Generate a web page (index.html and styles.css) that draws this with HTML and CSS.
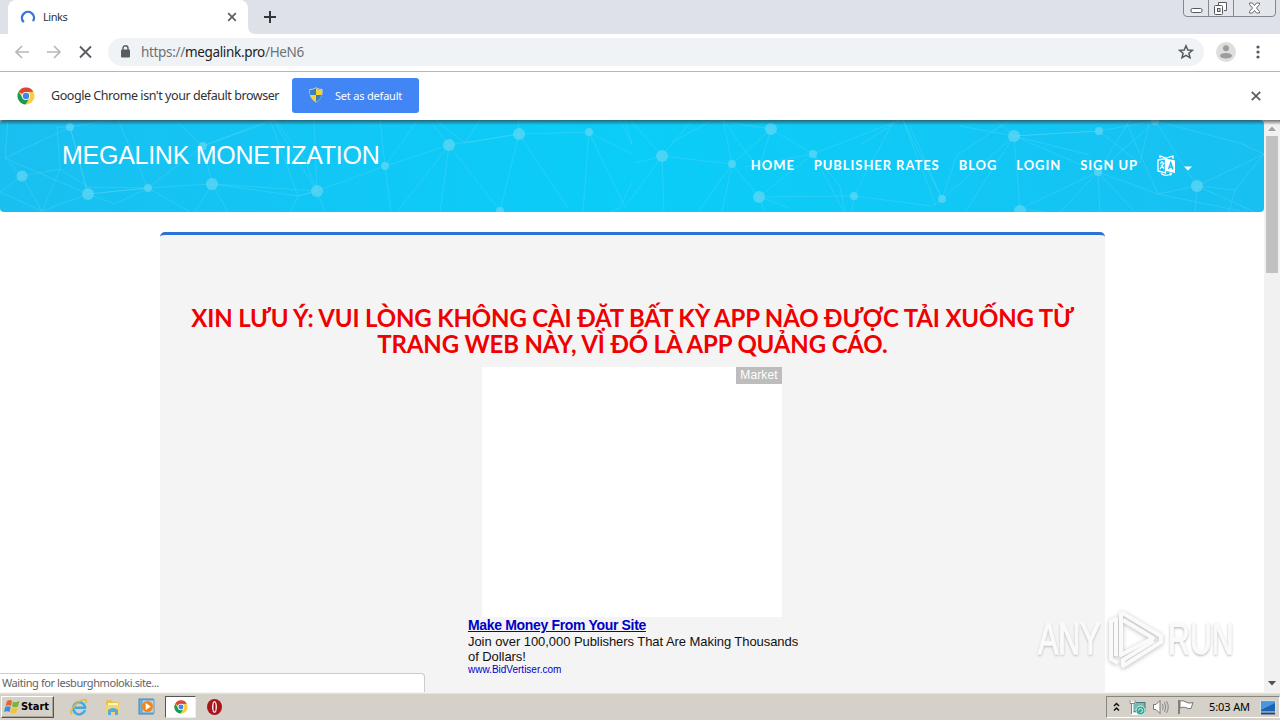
FILE: index.html
```
<!DOCTYPE html>
<html lang="en">
<head>
<meta charset="utf-8">
<title>Links</title>
<link rel="stylesheet" href="styles.css">
</head>
<body>
<svg width="0" height="0" class="defs">
  <defs>
    <symbol id="chrome" viewBox="0 0 18 18">
      <circle cx="9" cy="9" r="8.5" fill="#f9cd45"/>
      <path d="M9 9 1.6 4.800A8.500 8.500 0 0 1 16.400 4.800L9 5z" fill="#dc4437"/>
      <path d="M1.600 4.800A8.500 8.500 0 0 0 8.600 17.500L12.400 11 9 9 5.400 10.800z" fill="#179c58"/>
      <circle cx="9" cy="9" r="4.100" fill="#fff"/>
      <circle cx="9" cy="9" r="3.200" fill="#4285e8"/>
    </symbol>
  </defs>
</svg>
<div class="tabstrip">
  <div class="tab">
    <svg class="spin" width="16" height="16" viewBox="0 0 16 16"><path d="M3.800 13.200A6 6 0 1 1 13 12.200" fill="none" stroke="#3b73d8" stroke-width="2.400"/></svg>
    <span class="tab-title">Links</span>
    <svg width="10" height="10" viewBox="0 0 10 10"><path d="M1.200 1.200 8.800 8.800M8.800 1.200 1.200 8.800" stroke="#5b5f64" stroke-width="1.700"/></svg>
  </div>
  <svg class="flare" width="8" height="8" viewBox="0 0 8 8"><path d="M0 0Q0 8 8 8H0z" fill="#fff"/></svg>
  <svg class="plus" width="12" height="12" viewBox="0 0 12 12"><path d="M6 0V12M0 6H12" stroke="#33373b" stroke-width="2"/></svg>
  <svg class="winctl" width="94" height="17" viewBox="0 0 94 17">
    <path d="M.5 0V13Q.5 16.500 4 16.500H89Q92.500 16.500 92.500 13V0M25.500 0V16M50.500 0V16" fill="#e3e6eb" stroke="#85898f"/>
    <rect x="8" y="8.500" width="11" height="4" rx="1.500" fill="#fff" stroke="#55585d"/>
    <path d="M35.500 5V2.500H43.500V10.500H41" fill="#fff" stroke="#55585d"/>
    <rect x="31.500" y="5.500" width="8" height="9" rx="1" fill="#fff" stroke="#55585d"/><rect x="34.500" y="8.500" width="2.500" height="3" fill="#ddd" stroke="#55585d"/>
    <path d="M66.500 3H69.500L71.500 5.500 73.500 3H76.500V4.500L73.500 8 76.500 11.500V13H73.500L71.500 10.500 69.500 13H66.500V11.500L69.500 8 66.500 4.500z" fill="#fff" stroke="#66696e"/>
  </svg>
</div>
<div class="toolbar">
  <svg class="navicons" width="80" height="16" viewBox="0 0 80 16" fill="none">
    <path d="M15 8H2M8 2 2 8 8 14M33 8H46M40 2 46 8 40 14" stroke="#b7b8ba" stroke-width="1.700"/>
    <path d="M66 2.500 77 13.500M77 2.500 66 13.500" stroke="#5a5d61" stroke-width="1.900"/>
  </svg>
  <div class="omnibox">
    <svg width="9" height="13" viewBox="0 0 9 13"><rect y="4.500" width="9" height="8" rx="1" fill="#585c61"/><path d="M2 5V3.300A2.500 2.500 0 0 1 7 3.300V5" fill="none" stroke="#585c61" stroke-width="1.400"/></svg>
    <span class="url">https://<b>megalink.pro</b>/HeN6</span>
    <svg class="star" width="16" height="16" viewBox="0 0 16 16"><path d="M8 1.800 9.800 6 14.400 6.300 10.900 9.300 12 13.800 8 11.400 4 13.800 5.100 9.300 1.600 6.300 6.200 6z" fill="none" stroke="#55595e" stroke-width="1.500"/></svg>
  </div>
  <svg class="avatar" width="20" height="20" viewBox="0 0 20 20"><circle cx="10" cy="10" r="10" fill="#dedede"/><circle cx="10" cy="6.300" r="3" fill="#9c9c9c"/><ellipse cx="10" cy="13.700" rx="6" ry="2.800" fill="#9c9c9c"/></svg>
  <svg width="4" height="14" viewBox="0 0 4 14" fill="#55595e"><circle cx="2" cy="2" r="1.600"/><circle cx="2" cy="7" r="1.600"/><circle cx="2" cy="12" r="1.600"/></svg>
</div>
<div class="infobar">
  <svg width="18" height="18"><use href="#chrome"/></svg>
  <span class="info-text">Google Chrome isn't your default browser</span>
  <div class="set-default">
    <svg width="14" height="16" viewBox="0 0 14 16"><path d="M7 .8Q10 2.800 13.200 2.500 13.800 11 7 15.200 .2 11 .8 2.500 4 2.800 7 .8z" fill="#3477bd" stroke="#cdd6dc"/><path d="M7 1.500V8H12.700Q13.100 5.500 12.800 3 9.500 3.200 7 1.500zM7 8H1.300Q2.500 12.500 7 14.700z" fill="#f7d233"/><path d="M7 1.500V8H1.300Q.9 5.500 1.200 3 4.500 3.200 7 1.500zM7 8H12.700Q11.500 12.500 7 14.700z" fill="#3c7fc0"/></svg>
    <span>Set as default</span>
  </div>
  <svg class="info-close" width="10" height="10" viewBox="0 0 10 10"><path d="M.8.8 9.200 9.200M9.200.8.800 9.200" stroke="#5b5f64" stroke-width="1.800"/></svg>
</div>
<div class="viewport">
  <div class="page">
    <header class="hero">
      <svg class="net" width="1264" height="92" viewBox="0 120 1264 92">
        <g stroke="#6bdcf8" stroke-opacity=".3" fill="none">
          <path d="M8 120 5 158 22 176 42 211 88 194 70 127 5 158M5 158 88 194 148 188 212 184 317 191 385 166 449 145 519 134 589 132M22 176 60 169 57 127 70 127 110 120M60 169 42 211M60 169 88 187 148 188M70 127 88 194 115 204 148 188 118 120M88 194 148 188 190 212M22 176 0 192 42 211M148 188 203 146 212 184 195 212M212 184 228 212M175 120 203 146 270 120 298 196 317 191 314 120M317 191 273 120M317 191 325 212M317 191 298 196 212 184M298 196 290 212M203 146 275 120 305 160 317 191M385 166 380 120M385 166 418 120M385 166 391 212"/>
          <path d="M430 120 449 145 440 212M449 145 398 211M435 120 465 143 519 134M449 145 500 211M465 143 480 120M519 134 568 208M519 134 518 120 560 120M519 134 500 211M589 132 583 212M589 132 625 207 662 156 732 164 771 129 713 120 672 142M630 120 662 156 664 212M589 132 632 154M632 182 620 208 610 212M662 156 635 163M620 120 632 144 625 120M662 156 692 120M732 164 723 120 759 170 771 129M732 164 698 212M732 164 722 212M732 164 759 197 813 154 771 129M759 197 854 196 932 206 942 199 903 120 936 206M759 197 790 208M759 197 765 212M745 167 813 154 900 120 860 145M813 154 840 186 845 212M813 154 844 212M854 196 894 120M854 196 852 212M942 199 1014 136 1099 131M942 199 957 155 1010 120M942 199 910 126M965 212 1014 136 1020 209"/>
          <path d="M1014 136 995 120M1014 136 1098 172 1155 121 1197 186 1264 154M1014 136 1090 155M1099 131 1014 136 960 126M1099 131 1155 121 1240 143 1264 154M1099 131 1140 163 1150 120M1130 120 1098 172 1020 209M1098 172 1100 212M1098 172 1135 212M1098 172 1158 194 1240 211M1098 172 1060 212M1197 186 1235 190 1264 154M1197 186 1195 212M1197 186 1158 194 1125 120M1235 190 1229 212M1197 186 1255 212M1020 209 1045 212"/>
        </g>
        <g fill="#63d7f4" fill-opacity=".7">
          <circle cx="70" cy="127" r="4"/><circle cx="22" cy="176" r="5.500"/><circle cx="88" cy="194" r="6"/><circle cx="148" cy="188" r="4"/><circle cx="203" cy="146" r="4"/><circle cx="212" cy="184" r="6"/><circle cx="317" cy="191" r="6"/><circle cx="385" cy="166" r="4"/><circle cx="449" cy="145" r="6"/><circle cx="519" cy="134" r="6"/><circle cx="589" cy="132" r="4"/><circle cx="500" cy="211" r="4"/><circle cx="662" cy="156" r="6"/><circle cx="732" cy="164" r="4"/><circle cx="771" cy="129" r="6"/><circle cx="759" cy="197" r="6"/><circle cx="813" cy="154" r="4"/><circle cx="854" cy="196" r="4"/><circle cx="942" cy="199" r="4"/><circle cx="1014" cy="136" r="6"/><circle cx="1099" cy="131" r="4"/><circle cx="1155" cy="121" r="4"/><circle cx="1098" cy="172" r="4"/><circle cx="1197" cy="186" r="6"/><circle cx="1020" cy="211" r="6"/>
        </g>
      </svg>
      <div class="brand">MEGALINK MONETIZATION</div>
      <nav class="menu">
        <span>HOME</span><span>PUBLISHER RATES</span><span>BLOG</span><span>LOGIN</span><span>SIGN UP</span>
        <svg class="lang" width="35" height="22" viewBox="0 0 35 22">
          <path d="M1 5 8.500 3.500V18L1 16zM3 3V1L9 3 16 1V4" fill="none" stroke="#fff" stroke-width="1.300"/>
          <path d="M9 3.500 18 5.500V18L9 16z" fill="#fff"/>
          <path d="M11.500 14 13.800 7.500 16 14.500M12.300 12H15.200" fill="none" stroke="#12bde8" stroke-width="1.300"/>
          <path d="M3 8H7.500M5 6V8M7 8 3 14M4 10 7 13.500M4 18.500Q9 22 14 19M12.500 18 14.500 18.500 13.500 20.500" fill="none" stroke="#fff" stroke-width="1.200"/>
          <path d="M27 11.500H35L31 15.500z" fill="#fff"/>
        </svg>
      </nav>
    </header>
    <main class="box">
      <h3 class="notice">XIN LƯU Ý: VUI LÒNG KHÔNG CÀI ĐẶT BẤT KỲ APP NÀO ĐƯỢC TẢI XUỐNG TỪ TRANG WEB NÀY, VÌ ĐÓ LÀ APP QUẢNG CÁO.</h3>
      <div class="banner"><span class="market">Market</span></div>
      <div class="ad">
        <div><span class="ad-title">Make Money From Your Site</span></div>
        <div class="ad-body">Join over 100,000 Publishers That Are Making Thousands<br>of Dollars!</div>
        <div class="ad-url">www.BidVertiser.com</div>
      </div>
    </main>
  </div>
  <div class="scrollbar">
    <svg width="16" height="15" viewBox="0 0 16 15"><path d="M4 11 8 6.500 12 11z" fill="#a0a0a0"/></svg>
    <div class="thumb"></div>
    <svg class="down" width="16" height="17" viewBox="0 0 16 17"><path d="M4 6H12L8 10.500z" fill="#505050"/></svg>
  </div>
  <div class="status">Waiting for lesburghmoloki.site...</div>
  <div class="watermark">
    <span class="wm-any">ANY</span>
    <svg class="wm-play" width="64" height="68" viewBox="0 0 64 68" fill="none" stroke="#fafafa" stroke-linejoin="round"><path d="M12 51V14L7 16V54L14 58" stroke-width="4"/><path d="M17 7 57 31V37L19 61V55L50 36" stroke-width="4"/><path d="M17 7V50L49 33 19 15" stroke-width="4"/></svg>
    <span class="wm-run">RUN</span>
  </div>
</div>
<div class="taskbar">
  <div class="start">
    <svg width="16" height="16" viewBox="0 0 16 16"><path d="M3 2Q6 0 8 2L7 7Q4.500 5.500 1.500 7z" fill="#e9652f"/><path d="M9 2.500Q12 4 15.500 2L14 7.500Q11 9 8 7.500z" fill="#74b643"/><path d="M1.200 8Q4 6.500 6.700 8L5.500 13Q3 11.500 0 13z" fill="#3c8fd8"/><path d="M7.700 8.500Q10.500 10 13.700 8.500L12.200 13.800Q9 15.500 6.300 13.500z" fill="#f7c336"/></svg>
    <span>Start</span>
  </div>
  <div class="quick">
    <svg width="18" height="18" viewBox="0 0 18 18" fill="none"><path d="M15 12.200A6 6 0 1 1 15 8.500V9.800H5" stroke="#42a9df" stroke-width="2.500"/><path d="M2 15Q-1 17 2 11 7 3 14 1.500 18 1 15.500 5" stroke="#e3b940" stroke-width="1.500"/></svg>
    <svg width="18" height="18" viewBox="0 0 18 18"><path d="M2 5V2H7L9 4H15V15H2z" fill="#e6c257"/><path d="M4 5H14V10H4z" fill="#fff6bc"/><path d="M2 7H16V15H2z" fill="#f0d672"/><path d="M4 17V12Q9 8 14 12V17H11V14H7V17z" fill="#58add6"/></svg>
    <svg width="18" height="18" viewBox="0 0 18 18"><rect x="1" y="1" width="14" height="15" fill="#6fb4df" stroke="#4585b5"/><rect x="4" y="2" width="12" height="13" fill="#b4d9ef" stroke="#5d9dca"/><circle cx="9.500" cy="8.500" r="5.500" fill="#f08618"/><path d="M7.700 5V12L12.800 8.500z" fill="#fff"/></svg>
  </div>
  <div class="task-active"><svg width="14" height="14"><use href="#chrome"/></svg></div>
  <svg class="opera" width="17" height="18" viewBox="0 0 17 18"><ellipse cx="8.500" cy="9" rx="7.500" ry="8" fill="#a91519"/><ellipse cx="8.500" cy="9" rx="2.500" ry="6" fill="#f8e8e8"/><ellipse cx="8.500" cy="9" rx="1" ry="4.500" fill="#8f1014"/></svg>
  <div class="tray">
    <svg width="7" height="10" viewBox="0 0 7 10"><path d="M1 4 3.500 1.500 6 4M1 8.500 3.500 6 6 8.500" fill="none" stroke="#111" stroke-width="1.500"/></svg>
    <svg class="netico" width="17" height="17" viewBox="0 0 17 17"><rect x="4" y="3.500" width="12" height="9" fill="#78b9b1" stroke="#477"/><path d="M1.500 1V4H5.500V1M3.500 4V15H9" fill="none" stroke="#fff" stroke-width="2"/><path d="M1 1V4.500H6V1M2.500 5V15" fill="none" stroke="#555" stroke-width=".7"/><circle cx="11.500" cy="11.500" r="4.500" fill="#35a99c" stroke="#d9eeee"/><path d="M9.500 11.500A2 2 0 1 1 11.500 13.500" fill="none" stroke="#d7f2e9"/></svg>
    <svg class="vol" width="18" height="16" viewBox="0 0 18 16"><path d="M1.500 5.500H4L8 1.500V14.500L4 10.500H1.500z" fill="#fff" stroke="#777"/><path d="M10.500 5Q12 8 10.500 11M12.500 3Q15 8 12.500 13M14.500 2Q18 8 14.500 14" fill="none" stroke="#888"/></svg>
    <svg class="flag" width="17" height="16" viewBox="0 0 17 16"><path d="M2 1V15" stroke="#666" stroke-width="1.500"/><path d="M3 2Q6 1 9 3 12 5 16 3.500L14 9.500Q11 10 8.500 8.500 6 7.500 3 9z" fill="#fff" stroke="#777"/></svg>
    <span class="clock">5:03 AM</span>
    <svg width="16" height="15" viewBox="0 0 16 15"><rect x=".5" y="1" width="15" height="11" fill="#1c62b7" stroke="#d7e1e9"/><path d="M1 10 15 3V1.500H1z" fill="#4b95dc"/><path d="M1 13.500H15" stroke="#234579" stroke-width="2"/></svg>
  </div>
</div>
</body>
</html>
```
FILE: styles.css
```
* { box-sizing: border-box; }
body { margin: 0; width: 1280px; height: 720px; overflow: hidden; display: flex; flex-direction: column; background: #fff; font-family: "Noto Sans", sans-serif; color: #303236; }
svg { display: block; flex: none; }
span, div { white-space: nowrap; }
.defs { position: absolute; }
.tabstrip { height: 34px; flex: none; display: flex; background: #dee1e8; padding-left: 8px; align-items: flex-end; }
.tab { width: 240px; height: 34px; background: #fff; border-radius: 8px 8px 0 0; display: flex; align-items: center; padding: 0 11px 0 12px; }
.tab-title { font-size: 11px; line-height: 16px; letter-spacing: -0.45px; margin: 0 0 1px 7px; flex: 1; }
.plus { margin: 0 0 11px 8px; }
.winctl { margin-left: auto; margin-right: 3px; align-self: flex-start; }
.toolbar { height: 38px; flex: none; display: flex; align-items: center; border-bottom: 1px solid #b4b6b8; padding: 0 20px 2px 14px; }
.omnibox { width: 1096px; height: 28px; margin-left: 14px; border-radius: 14px; background: #f0f3f6; display: flex; align-items: center; padding: 0 10px 0 13px; }
.url { font-size: 13.5px; letter-spacing: -0.33px; margin-left: 11px; color: #6d7175; }
.url b { font-weight: 400; color: #202124; }
.star { margin-left: auto; }
.avatar { margin: 0 20px 0 12px; }
.infobar { height: 48px; flex: none; display: flex; align-items: center; padding: 0 19px 1px 17px; }
.info-text { font-size: 12.5px; letter-spacing: -0.44px; margin-left: 16px; width: 229px; }
.set-default { width: 127px; height: 35px; margin-left: 12px; border-radius: 3px; background: #4285f4; color: #fff; display: flex; align-items: center; gap: 12px; padding: 0 0 1px 17px; font-size: 11px; letter-spacing: -.2px; }
.info-close { margin-left: auto; }
.viewport { position: relative; height: 572px; flex: none; display: flex; overflow: hidden; }
.viewport::before { content: ""; position: absolute; z-index: 2; top: 0; left: 0; width: 1280px; height: 5px; background: linear-gradient(rgba(45,50,55,.65), rgba(45,50,55,0)); }
.page { width: 1264px; height: 572px; overflow: hidden; }
.hero { position: relative; height: 92px; border-radius: 4px; overflow: hidden; background: linear-gradient(90deg, #1abff0, #10c8f6 30%, #0acdf8 50%, #10c9f6 70%, #18c0f1); display: flex; justify-content: space-between; padding: 0 72px 0 62px; color: #fff; }
.net { position: absolute; left: 0; top: 0; }
.brand { position: relative; font: 25px/30px "Liberation Sans", sans-serif; letter-spacing: -0.27px; padding-top: 20px; }
.menu { position: relative; display: flex; height: 90px; align-items: center; gap: 19px; font: 700 13px/20px Lato, sans-serif; letter-spacing: .93px; }
.lang { margin-top: 2px; }
.box { width: 945px; height: 600px; margin: 20px 0 0 160px; border-top: 3px solid #2a73d5; border-radius: 5px 5px 0 0; background: #f4f4f4; padding-top: 70px; }
.notice { margin: 0; padding: 0 20px; white-space: normal; font: 700 24px/26px Lato, sans-serif; letter-spacing: -.16px; color: #f00000; text-align: center; }
.banner { width: 300px; height: 250px; margin: 10px 0 0 322px; background: #fff; display: flex; justify-content: flex-end; align-items: flex-start; }
.market { width: 46px; height: 17px; background: #bdbdbd; color: #fff; font: 12px/17px "Liberation Sans", sans-serif; letter-spacing: .1px; text-align: center; }
.ad { margin-left: 308px; font-family: "Liberation Sans", sans-serif; color: #111; }
.ad-title { display: block; font-size: 14px; line-height: 17px; letter-spacing: -.33px; font-weight: 700; color: #0000c8; text-decoration: underline; }
.ad-body { font-size: 13px; line-height: 15px; letter-spacing: -.06px; }
.ad-url { font-size: 10px; line-height: 12px; color: #0000c8; }
.scrollbar { width: 16px; height: 572px; background: #f1f1f1; display: flex; flex-direction: column; align-items: center; }
.thumb { width: 12px; height: 137px; background: #c1c1c1; margin-top: 1px; }
.down { margin-top: auto; }
.status { position: absolute; left: 0; bottom: 0; width: 425px; height: 19px; background: #fff; border: 1px solid #ccc; border-left: 0; border-bottom: 0; border-radius: 0 4px 0 0; font-size: 11px; line-height: 18px; letter-spacing: -.42px; padding-left: 2px; color: #606367; }
.watermark { position: absolute; left: 1038px; top: 485px; width: 200px; display: flex; align-items: center; font: 400 44px/68px "Liberation Sans", sans-serif; color: #fafafa; -webkit-text-stroke: 1.5px #fafafa; text-shadow: 0 1px 3px #b4b4b4, 0 2px 3px #cfcfcf; }
.wm-play { filter: drop-shadow(0 1px 2px #bcbcbc); }
.wm-any, .wm-run { width: 66px; transform: scaleX(.69); transform-origin: 0 50%; }
.taskbar { height: 28px; flex: none; border-top: 1px solid #f5f3ee; background: #d5d1c8; box-shadow: inset 0 1px #e5e1d9; display: flex; align-items: center; padding: 1px 0 0 1px; }
.start { width: 53px; height: 22px; border: 1px solid; border-color: #fff #555 #555 #fff; box-shadow: inset -1px -1px #aaa69e; display: flex; align-items: center; padding-left: 2px; gap: 1px; font: 700 11px/20px "DejaVu Sans Condensed", "DejaVu Sans", sans-serif; color: #000; }
.start span { letter-spacing: -.05px; }
.quick { display: flex; gap: 16px; margin-left: 16px; }
.task-active { width: 31px; height: 22px; background: #fff; border: 1px solid; border-color: #555 #eee #eee #555; margin-left: 9px; display: flex; align-items: center; justify-content: center; }
.opera { margin-left: 10px; }
.tray { margin-left: auto; width: 174px; height: 22px; border: 1px solid; border-color: #898680 #fff #fff #898680; display: flex; align-items: center; padding-left: 6px; color: #000; }
.netico { margin-left: 9px; }
.vol { margin-left: 6px; }
.flag { margin-left: 7px; }
.clock { width: 42px; margin: 0 9px 1px 15px; font-size: 11px; line-height: 16px; letter-spacing: -.1px; }
```
